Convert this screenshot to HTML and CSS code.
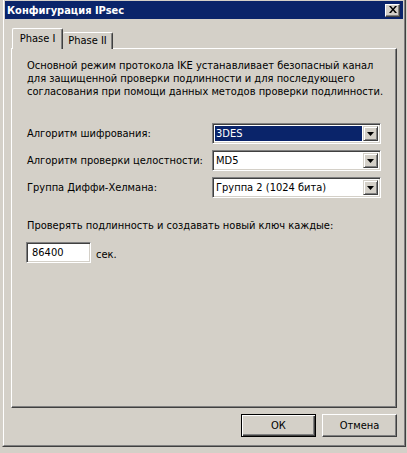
FILE: index.html
```html
<!DOCTYPE html>
<html lang="ru">
<head>
<meta charset="utf-8">
<title>Конфигурация IPsec</title>
<link rel="stylesheet" href="styles.css">
</head>
<body>
<div class="window">
  <div class="frame">
    <div class="titlebar">
      <span class="title">Конфигурация IPsec</span>
      <span class="close">
        <svg width="8" height="7" viewBox="0 0 8 7"><path d="M0 0h2l2 2.5L6 0h2L5 3.5 8 7H6L4 4.5 2 7H0l3-3.5z" fill="#000"/></svg>
      </span>
    </div>
    <div class="content">
      <div class="tabs">
        <div class="tab active">Phase I</div>
        <div class="tab">Phase II</div>
      </div>
      <div class="panel">
        <p class="intro">Основной режим протокола IKE устанавливает безопасный канал<br>для защищенной проверки подлинности и для последующего<br>согласования при помощи данных методов проверки подлинности.</p>
        <div class="form">
          <label class="label">Алгоритм шифрования:</label>
          <div class="combo"><span class="value selected">3DES</span><span class="drop"><svg width="7" height="4" viewBox="0 0 7 4"><path d="M0 0h7L3.5 4z" fill="#000"/></svg></span></div>
          <label class="label">Алгоритм проверки целостности:</label>
          <div class="combo"><span class="value">MD5</span><span class="drop"><svg width="7" height="4" viewBox="0 0 7 4"><path d="M0 0h7L3.5 4z" fill="#000"/></svg></span></div>
          <label class="label">Группа Диффи-Хелмана:</label>
          <div class="combo"><span class="value">Группа 2 (1024 бита)</span><span class="drop"><svg width="7" height="4" viewBox="0 0 7 4"><path d="M0 0h7L3.5 4z" fill="#000"/></svg></span></div>
        </div>
        <p class="prompt">Проверять подлинность и создавать новый ключ каждые:</p>
        <div class="lifetime">
          <div class="input">86400</div>
          <span class="unit">сек.</span>
        </div>
      </div>
      <div class="buttons">
        <button class="btn default">ОК</button>
        <button class="btn">Отмена</button>
      </div>
    </div>
  </div>
</div>
</body>
</html>
```

FILE: styles.css
```css
* { box-sizing: border-box; }
html, body { margin: 0; padding: 0; }
body {
  background: #d4d0c8;
  font-family: "DejaVu Sans Condensed", "DejaVu Sans", Tahoma, sans-serif;
  font-stretch: condensed;
  font-size: 11px;
  color: #000;
  overflow: hidden;
  width: 407px;
  height: 453px;
}
.window {
  width: 404px;
  height: 449px;
  margin: -2px 0 0 2px;
  border: 1px solid;
  border-color: #d4d0c8 #404040 #404040 #d4d0c8;
  background: #d4d0c8;
  display: flex;
  flex-direction: column;
}
.frame {
  flex: 1;
  border: 1px solid;
  border-color: #fff #808080 #808080 #fff;
  padding: 1px;
  display: flex;
  flex-direction: column;
}
.titlebar {
  height: 18px;
  background: #0a246a;
  display: flex;
  align-items: center;
  justify-content: space-between;
  padding: 0 3px 0 2px;
}
.title {
  color: #fff;
  font-weight: bold;
  font-size: 11px;
  white-space: nowrap;
}
.close {
  width: 15px;
  height: 13px;
  background: #d4d0c8;
  border: 1px solid;
  border-color: #fff #404040 #404040 #fff;
  box-shadow: inset -1px -1px 0 #808080;
  display: flex;
  align-items: center;
  justify-content: center;
  padding-bottom: 1px;
}
.close svg { display: block; }
.content {
  flex: 1;
  padding: 9px 6px 7px 6px;
  display: flex;
  flex-direction: column;
}
.tabs {
  display: flex;
  align-items: flex-end;
  height: 21px;
  margin: 0 0 -1px 1px;
  position: relative;
  z-index: 1;
}
.tab {
  background: #d4d0c8;
  border-top: 1px solid #fff;
  border-right: 1px solid #404040;
  box-shadow: inset -1px 0 0 #808080;
  border-radius: 2px 2px 0 0;
  display: flex;
  align-items: center;
  justify-content: center;
  white-space: nowrap;
}
.tab.active {
  width: 51px;
  height: 21px;
  border-left: 1px solid #fff;
  padding-bottom: 1px;
}
.tab:not(.active) {
  width: 50px;
  height: 17px;
  padding-bottom: 1px;
}
.panel {
  width: 386px;
  height: 360px;
  border: 1px solid;
  border-color: #fff #404040 #404040 #fff;
  box-shadow: inset -1px -1px 0 #808080;
  padding: 10px 10px 0 15px;
}
.intro {
  margin: 0;
  line-height: 13px;
  white-space: nowrap;
}
.form {
  margin-top: 25px;
  display: grid;
  grid-template-columns: 185px 169px;
  grid-auto-rows: 21px;
  row-gap: 6px;
  align-items: center;
}
.label { white-space: nowrap; }
.combo {
  height: 21px;
  background: #fff;
  border: 1px solid;
  border-color: #808080 #fff #fff #808080;
  box-shadow: inset 1px 1px 0 #404040, inset -1px -1px 0 #d4d0c8;
  padding: 2px;
  display: flex;
  align-items: stretch;
}
.value {
  flex: 1;
  display: flex;
  align-items: center;
  padding-left: 1px;
  margin-right: 1px;
  white-space: nowrap;
}
.value.selected {
  background: #0a246a;
  color: #fff;
}
.drop {
  width: 15px;
  background: #d4d0c8;
  border: 1px solid;
  border-color: #d4d0c8 #404040 #404040 #d4d0c8;
  box-shadow: inset 1px 1px 0 #fff, inset -1px -1px 0 #808080;
  display: flex;
  align-items: center;
  justify-content: center;
}
.drop svg { display: block; }
.prompt {
  margin: 21px 0 0 0;
  line-height: 13px;
  white-space: nowrap;
}
.lifetime {
  margin: 10px 0 0 -1px;
  display: flex;
  align-items: center;
}
.input {
  width: 65px;
  height: 21px;
  background: #fff;
  border: 1px solid;
  border-color: #808080 #fff #fff #808080;
  box-shadow: inset 1px 1px 0 #404040, inset -1px -1px 0 #d4d0c8;
  padding: 0 0 0 5px;
  display: flex;
  align-items: center;
}
.unit {
  margin-left: 5px;
  padding-top: 4px;
}
.buttons {
  margin-top: 6px;
  display: flex;
  justify-content: flex-end;
  gap: 6px;
}
.btn {
  width: 75px;
  height: 23px;
  margin: 0;
  padding: 0;
  font: inherit;
  color: #000;
  background: #d4d0c8;
  border: 1px solid;
  border-color: #fff #404040 #404040 #fff;
  box-shadow: inset -1px -1px 0 #808080;
}
.btn.default {
  border: 1px solid #000;
  box-shadow: inset 1px 1px 0 #fff, inset -1px -1px 0 #404040, inset -2px -2px 0 #808080;
}
```
